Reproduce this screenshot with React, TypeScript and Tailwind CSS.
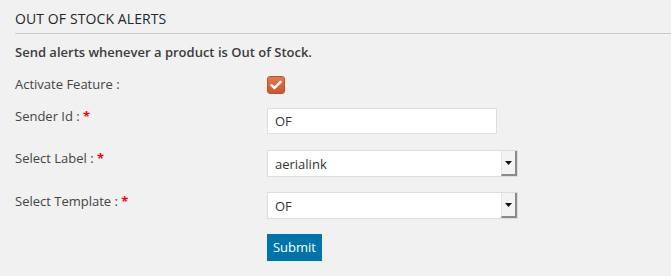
import React from "react";

function SelectBox({ value }: { value: string }) {
  return (
    <div className="flex h-[27px] w-[251px] items-stretch border border-[#dddddd] bg-white">
      <div className="flex flex-1 items-center pl-[7px] text-[13px] text-[#333]">{value}</div>
      <div className="flex w-[16px] items-center justify-center border-l border-[#e6e6e6] border-r-[2px] border-b-[2px] border-r-[#8a8a8a] border-b-[#8a8a8a] bg-[#f3f3f3]">
        <svg width="7" height="4" viewBox="0 0 7 4">
          <path d="M0 0 H7 L3.5 4 Z" fill="#111" />
        </svg>
      </div>
    </div>
  );
}

export default function App() {
  return (
    <div
      className="h-[276px] w-[671px] overflow-hidden bg-[#f1f1f1] pl-[15px] text-[#444]"
      style={{ fontFamily: '"Open Sans", "Noto Sans", sans-serif' }}
    >
      <div className="border-b border-[#cccccc] pt-[9px] pb-[4px] text-[14px] leading-[20px] tracking-[0.1px] text-[#23282d]">
        OUT OF STOCK ALERTS
      </div>
      <div className="mt-[9px] text-[13px] font-semibold leading-[18px] text-[#3c3c3c]">
        Send alerts whenever a product is Out of Stock.
      </div>

      <div className="mt-[14px] flex text-[13px] leading-[18px]">
        <div className="w-[252px]">Activate Feature :</div>
        <div className="mt-[1px] flex h-[18px] w-[18px] items-center justify-center rounded-[3px] border border-[#b8532c] bg-gradient-to-b from-[#e27a4e] to-[#c9582f]">
          <svg width="12" height="10" viewBox="0 0 12 10">
            <path d="M1.5 5.2 L4.5 8 L10.5 1.8" fill="none" stroke="white" strokeWidth="2.4" strokeLinecap="round" strokeLinejoin="round" />
          </svg>
        </div>
      </div>

      <div className="mt-[13px] flex text-[13px] leading-[18px]">
        <div className="w-[252px]">
          Sender Id : <span className="font-bold text-[#ff0000]">*</span>
        </div>
        <div className="mt-[1px] flex h-[26px] w-[230px] items-center border border-[#dddddd] bg-white pl-[7px] text-[13px] text-[#333]">
          OF
        </div>
      </div>

      <div className="mt-[15px] flex text-[13px] leading-[18px]">
        <div className="w-[252px]">
          Select Label : <span className="font-bold text-[#ff0000]">*</span>
        </div>
        <div className="mt-[1px]">
          <SelectBox value="aerialink" />
        </div>
      </div>

      <div className="mt-[15px] flex text-[13px] leading-[18px]">
        <div className="w-[252px]">
          Select Template : <span className="font-bold text-[#ff0000]">*</span>
        </div>
        <div>
          <SelectBox value="OF" />
        </div>
      </div>

      <div className="mt-[15px] flex pl-[252px]">
        <button className="h-[27px] w-[55px] bg-[#0073aa] text-[13px] text-white">Submit</button>
      </div>
    </div>
  );
}
